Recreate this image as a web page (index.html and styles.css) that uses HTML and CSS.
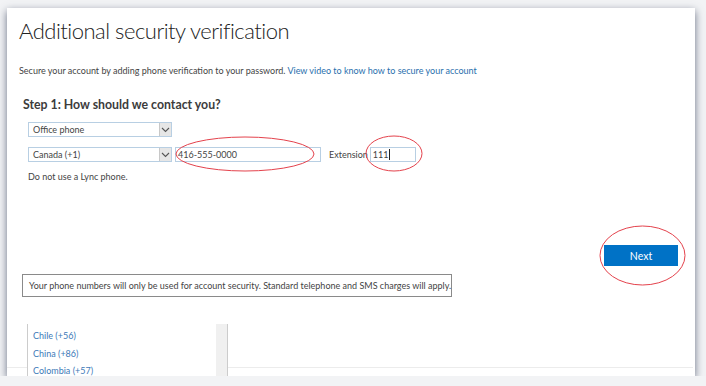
FILE: index.html
```html
<!DOCTYPE html>
<html lang="en">
<head>
    <meta charset="UTF-8">
    <title>Additional security verification</title>
    <link rel="stylesheet" href="styles.css">
</head>
<body>
    <div class="panel">
        <h1 class="title">Additional security verification</h1>
        <p class="intro">Secure your account by adding phone verification to your password. <a href="#">View video to know how to secure your account</a></p>

        <div class="step">
            <h3 class="step-title">Step 1: How should we contact you?</h3>
            <div class="row">
                <div class="select">
                    <span>Office phone</span>
                    <span class="arrow"><svg width="9" height="6" viewBox="0 0 9 6"><path d="M1 1l3.5 3.5L8 1" fill="none" stroke="#555" stroke-width="1.1"/></svg></span>
                </div>
            </div>
            <div class="row">
                <div class="select">
                    <span>Canada (+1)</span>
                    <span class="arrow"><svg width="9" height="6" viewBox="0 0 9 6"><path d="M1 1l3.5 3.5L8 1" fill="none" stroke="#555" stroke-width="1.1"/></svg></span>
                </div>
                <div class="field phone">416-555-0000</div>
                <span class="ext-label">Extension</span>
                <div class="field ext">111<span class="caret"></span></div>
            </div>
            <p class="hint">Do not use a Lync phone.</p>
        </div>

        <div class="actions">
            <button class="next">Next</button>
        </div>

        <div class="notice">Your phone numbers will only be used for account security. Standard telephone and SMS charges will apply.</div>

        <div class="country-list">
            <ul>
                <li>Chile (+56)</li>
                <li>China (+86)</li>
                <li>Colombia (+57)</li>
            </ul>
            <div class="scrollbar"></div>
        </div>

        <div class="footer-line"></div>

        <!-- hand-drawn annotation marks -->
        <svg class="marks" width="688" height="368" viewBox="0 0 688 368">
            <ellipse cx="238" cy="146" rx="69" ry="17" fill="none" stroke="#e4424c" stroke-width="1"/>
            <ellipse cx="387" cy="145.5" rx="28" ry="17.5" fill="none" stroke="#e4424c" stroke-width="1"/>
            <ellipse cx="635.5" cy="247.5" rx="42.5" ry="29.5" fill="none" stroke="#e4424c" stroke-width="1"/>
        </svg>
    </div>
</body>
</html>
```

FILE: styles.css
```css
body {
    margin: 0;
    background: #f2f3f5;
    font-family: Lato, "Open Sans", Arial, sans-serif;
    color: #444;
}
.panel {
    position: relative;
    margin: 8px 11px 0 7px;
    height: 368px;
    background: #fff;
    box-shadow: 0 3px 8px rgba(60, 70, 95, 0.75);
    overflow: hidden;
    padding-left: 12px;
    box-sizing: border-box;
}
.title {
    margin: 0;
    padding-top: 8px;
    font-size: 22px;
    font-weight: 300;
    letter-spacing: -0.5px;
    line-height: 30px;
    color: #222;
}
.intro {
    margin: 18px 0 0;
    font-size: 9px;
    line-height: 14px;
    color: #444;
}
.intro a {
    color: #2a6fad;
    text-decoration: none;
}
.step {
    padding-left: 4px;
    margin-top: 18px;
}
.step-title {
    margin: 0;
    font-size: 12.3px;
    font-weight: 700;
    line-height: 18px;
    color: #3c3c3c;
}
.row {
    display: flex;
    align-items: center;
    margin-left: 5px;
    margin-top: 8px;
}
.row + .row {
    margin-top: 10px;
}
.select {
    display: flex;
    align-items: center;
    justify-content: space-between;
    width: 144px;
    height: 15px;
    border: 1px solid #b8cfe3;
    box-sizing: border-box;
    font-size: 9px;
    padding-left: 4px;
    color: #444;
}
.arrow {
    display: flex;
    align-items: center;
    justify-content: center;
    width: 11px;
    height: 13px;
    background: #e6e6e6;
    border-left: 1px solid #c8c8c8;
}
.field {
    height: 15px;
    border: 1px solid #b8cfe3;
    box-sizing: border-box;
    font-size: 9px;
    line-height: 13px;
    padding-left: 2px;
    color: #444;
}
.phone {
    width: 146px;
    margin-left: 3px;
}
.ext-label {
    margin-left: 8px;
    font-size: 9px;
    color: #444;
}
.ext {
    width: 46px;
    margin-left: 2px;
    display: flex;
    align-items: center;
}
.caret {
    width: 1px;
    height: 11px;
    background: #222;
}
.hint {
    margin: 8px 0 0 5px;
    font-size: 9px;
    line-height: 14px;
}
.actions {
    display: flex;
    justify-content: flex-end;
    margin-top: 61px;
    padding-right: 17px;
}
.next {
    width: 74px;
    height: 21px;
    border: none;
    background: #0072c6;
    color: #fff;
    font-family: Lato, "Open Sans", Arial, sans-serif;
    font-size: 10.5px;
    padding: 0;
}
.notice {
    margin: 8px 0 0 3px;
    width: 430px;
    height: 23px;
    box-sizing: border-box;
    border: 1px solid #8a8a8a;
    font-size: 9px;
    line-height: 21px;
    padding-left: 6px;
    color: #444;
    white-space: nowrap;
}
.country-list {
    display: flex;
    margin: 27px 0 0 8px;
    width: 200px;
    height: 60px;
    border-left: 1px solid #ccc;
    position: relative;
    z-index: 1;
    background: #fff;
}
.country-list ul {
    list-style: none;
    margin: 0;
    padding: 3px 0 0 5px;
    flex: 1;
}
.country-list li {
    font-size: 9px;
    line-height: 17.5px;
    color: #3d7ab8;
}
.scrollbar {
    width: 11px;
    background: #f0f0f0;
    border-right: 1px solid #ccc;
}
.footer-line {
    position: absolute;
    left: 0;
    right: 2px;
    top: 359px;
    height: 1px;
    background: #ececec;
}
.marks {
    position: absolute;
    left: 0;
    top: 0;
    pointer-events: none;
}
```
